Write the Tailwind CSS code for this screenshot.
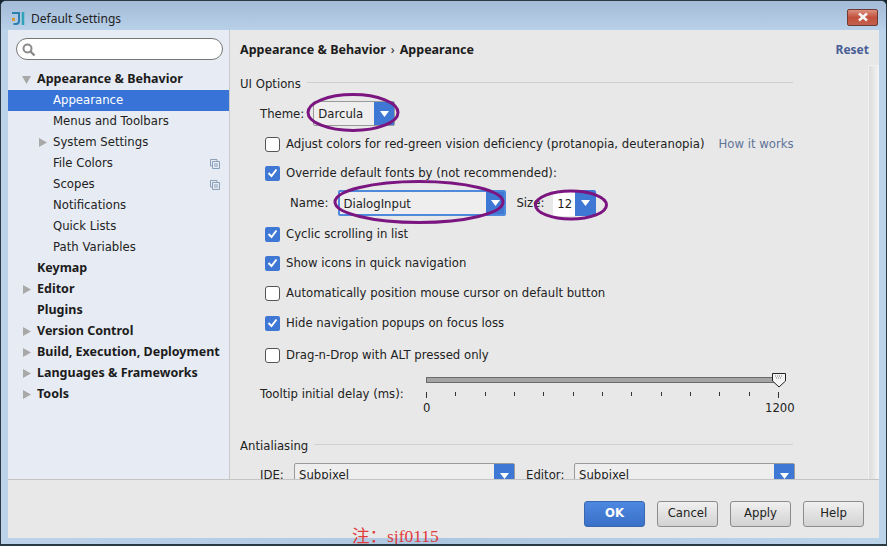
<!DOCTYPE html>
<html>
<head>
<meta charset="utf-8">
<script src="https://cdn.jsdelivr.net/npm/@tailwindcss/browser@4"></script>
</head>
<body class="w-[887px] h-[546px] overflow-hidden bg-[#15222c] font-['DejaVu_Sans',sans-serif] text-[11.7px] text-[#222]">
<div class="relative w-[887px] h-[546px] rounded-t-[6px] border border-[#2a3a44] border-b-[2px] bg-gradient-to-r from-[#bcd3ea] via-[#aec7e0] to-[#bcd4ea] flex flex-col overflow-hidden">
  <!-- title bar -->
  <div class="h-[29px] shrink-0 flex items-center pl-[10px] pr-[8px] pt-[6px] bg-gradient-to-b from-[#a3bbd6] to-[#b8d0e8]">
    <svg width="15" height="15" viewBox="0 0 15 15" class="shrink-0"><path d="M1 2H8V10Q8 13 5 13H2.500" fill="none" stroke="#2b7fb0" stroke-width="2"/><rect x="1" y="7" width="3" height="3" fill="#d6963a"/><path d="M12 1V14" stroke="#2fa3b8" stroke-width="2.500"/></svg>
    <span class="ml-[5px] font-['Noto_Sans',sans-serif] text-[12px] text-[#222]">Default Settings</span>
    <div class="ml-auto mt-[-3px] w-[31px] h-[17px] rounded-[2px] border border-[#6d3a34] bg-gradient-to-b from-[#dc8f7e] via-[#c2503c] to-[#c2604c] flex items-center justify-center">
      <svg width="12" height="10" viewBox="0 0 12 10"><path d="M2 1.500L10 8.500M10 1.500L2 8.500" stroke="#f4f4f4" stroke-width="2.600"/></svg>
    </div>
  </div>
  <!-- client -->
  <div class="mx-[7px] h-[508px] shrink-0 flex flex-col bg-[#e8e8e8]">
    <div class="h-[450px] flex shrink-0 overflow-hidden border-b border-[#c4c4c4]">
      <!-- sidebar -->
      <aside class="w-[222px] shrink-0 bg-[#e7ebf3] border-r border-[#c9c9c9] flex flex-col">
        <div class="ml-[8px] mr-[6px] mt-[8px] h-[22px] rounded-full border border-[#777] bg-white flex items-center pl-[4px] shrink-0">
          <svg width="15" height="15" viewBox="0 0 15 15"><circle cx="6.500" cy="6.500" r="4" fill="none" stroke="#8a8a8a" stroke-width="2"/><path d="M9.500 9.500L13.500 13.500" stroke="#8a8a8a" stroke-width="2.400"/></svg>
        </div>
        <ul class="mt-[9px] flex flex-col whitespace-nowrap">
          <li class="h-[21px] flex items-center font-bold font-['Noto_Sans',sans-serif] text-[12.5px] text-[#1c1c1c]"><svg width="9" height="8" viewBox="0 0 9 8" class="ml-[14px] mr-[6px]"><path d="M0 0H9L4.500 8Z" fill="#a8a8a8"/></svg>Appearance &amp; Behavior</li>
          <li class="h-[21px] flex items-center pl-[45px] bg-[#3874d8] text-white">Appearance</li>
          <li class="h-[21px] flex items-center pl-[45px]">Menus and Toolbars</li>
          <li class="h-[21px] flex items-center"><svg width="8" height="9" viewBox="0 0 8 9" class="ml-[31px] mr-[6px]"><path d="M0 0L8 4.500L0 9Z" fill="#a8a8a8"/></svg>System Settings</li>
          <li class="h-[21px] flex items-center pl-[45px]">File Colors<svg width="10" height="10" viewBox="0 0 10 10" class="ml-auto mr-[9px]"><path d="M.5.500H7V2M.5.500V7H2M2.500 2.500H9.500V9.500H2.500Z" fill="none" stroke="#8aa0b8"/><path d="M4 5H8M4 7H8" stroke="#8aa0b8"/></svg></li>
          <li class="h-[21px] flex items-center pl-[45px]">Scopes<svg width="10" height="10" viewBox="0 0 10 10" class="ml-auto mr-[9px]"><path d="M.5.500H7V2M.5.500V7H2M2.500 2.500H9.500V9.500H2.500Z" fill="none" stroke="#8aa0b8"/><path d="M4 5H8M4 7H8" stroke="#8aa0b8"/></svg></li>
          <li class="h-[21px] flex items-center pl-[45px]">Notifications</li>
          <li class="h-[21px] flex items-center pl-[45px]">Quick Lists</li>
          <li class="h-[21px] flex items-center pl-[45px]">Path Variables</li>
          <li class="h-[21px] flex items-center pl-[29px] font-bold font-['Noto_Sans',sans-serif] text-[12.5px] text-[#1c1c1c]">Keymap</li>
          <li class="h-[21px] flex items-center font-bold font-['Noto_Sans',sans-serif] text-[12.5px] text-[#1c1c1c]"><svg width="8" height="9" viewBox="0 0 8 9" class="ml-[15px] mr-[6px]"><path d="M0 0L8 4.500L0 9Z" fill="#a8a8a8"/></svg>Editor</li>
          <li class="h-[21px] flex items-center pl-[29px] font-bold font-['Noto_Sans',sans-serif] text-[12.5px] text-[#1c1c1c]">Plugins</li>
          <li class="h-[21px] flex items-center font-bold font-['Noto_Sans',sans-serif] text-[12.5px] text-[#1c1c1c]"><svg width="8" height="9" viewBox="0 0 8 9" class="ml-[15px] mr-[6px]"><path d="M0 0L8 4.500L0 9Z" fill="#a8a8a8"/></svg>Version Control</li>
          <li class="h-[21px] flex items-center font-bold font-['Noto_Sans',sans-serif] text-[12.5px] text-[#1c1c1c]"><svg width="8" height="9" viewBox="0 0 8 9" class="ml-[15px] mr-[6px]"><path d="M0 0L8 4.500L0 9Z" fill="#a8a8a8"/></svg>Build, Execution, Deployment</li>
          <li class="h-[21px] flex items-center font-bold font-['Noto_Sans',sans-serif] text-[12.5px] text-[#1c1c1c]"><svg width="8" height="9" viewBox="0 0 8 9" class="ml-[15px] mr-[6px]"><path d="M0 0L8 4.500L0 9Z" fill="#a8a8a8"/></svg>Languages &amp; Frameworks</li>
          <li class="h-[21px] flex items-center font-bold font-['Noto_Sans',sans-serif] text-[12.5px] text-[#1c1c1c]"><svg width="8" height="9" viewBox="0 0 8 9" class="ml-[15px] mr-[6px]"><path d="M0 0L8 4.500L0 9Z" fill="#a8a8a8"/></svg>Tools</li>
        </ul>
      </aside>
      <!-- main -->
      <main class="relative flex-1 flex flex-col min-w-0">
        <header class="h-[40px] shrink-0 flex items-center pl-[10px] pr-[10px] font-bold font-['Noto_Sans',sans-serif] text-[12.5px] text-[#1c1c1c]">
          <span>Appearance &amp; Behavior</span><span class="mx-[5px] font-normal">›</span><span>Appearance</span>
          <span class="ml-auto text-[12px] text-[#4a5f96]">Reset</span>
        </header>
        <div class="flex flex-1 min-h-0">
          <div class="w-[553px] ml-[10px] shrink-0 flex flex-col [&>*]:shrink-0 [&>div>span]:pt-[2px]">
            <div class="flex items-center h-[20px] mt-[4px]"><span>UI Options</span><i class="flex-1 ml-[6px] mt-[-4px] border-t border-[#cfcfcf]"></i></div>
            <div class="flex items-center h-[25px] mt-[7px] pl-[20px]">
              <span>Theme:</span>
              <div class="ml-[9px] w-[82px] h-[25px] flex rounded-[2px] border border-[#9a9a9a] bg-[#eeeeee]">
                <span class="flex-1 pl-[4px] leading-[24px]">Darcula</span>
                <span class="w-[20px] bg-[#3f78d4] flex items-center justify-center"><svg width="9" height="6" viewBox="0 0 9 6"><path d="M0 0H9L4.500 6Z" fill="#fff"/></svg></span>
              </div>
            </div>
            <div class="flex items-center h-[20px] mt-[8px] pl-[25px]">
              <i class="w-[15px] h-[15px] rounded-[3px] border border-[#555] bg-white shrink-0"></i>
              <span class="ml-[6px] whitespace-nowrap">Adjust colors for red-green vision deficiency (protanopia, deuteranopia)</span>
              <span class="ml-[14px] whitespace-nowrap text-[#5f7499]">How it works</span>
            </div>
            <div class="flex items-center h-[20px] mt-[9px] pl-[25px]">
              <i class="w-[15px] h-[15px] rounded-[2px] bg-[#3f78d4] shrink-0 flex items-center justify-center"><svg width="11" height="10" viewBox="0 0 11 10"><path d="M1.500 5L4.500 8L9.500 1.500" fill="none" stroke="#fff" stroke-width="2"/></svg></i>
              <span class="ml-[6px]">Override default fonts by (not recommended):</span>
            </div>
            <div class="flex items-center h-[26px] mt-[7px] pl-[50px]">
              <span>Name:</span>
              <div class="ml-[10px] w-[168px] h-[26px] flex rounded-[2px] border-[2px] border-[#4f89dc] bg-[#eeeeee]">
                <span class="flex-1 pl-[3px] leading-[24px]">DialogInput</span>
                <span class="w-[18px] bg-[#3f78d4] flex items-center justify-center"><svg width="9" height="6" viewBox="0 0 9 6"><path d="M0 0H9L4.500 6Z" fill="#fff"/></svg></span>
              </div>
              <span class="ml-[10px]">Size:</span>
              <div class="ml-[9px] w-[43px] h-[26px] flex rounded-[2px] bg-[#3f78d4]">
                <span class="w-[22px] bg-white pl-[4px] leading-[28px]">12</span>
                <span class="flex-1 flex items-center justify-center"><svg width="9" height="6" viewBox="0 0 9 6"><path d="M0 0H9L4.500 6Z" fill="#fff"/></svg></span>
              </div>
            </div>
            <div class="flex items-center h-[20px] mt-[8px] pl-[25px]">
              <i class="w-[15px] h-[15px] rounded-[2px] bg-[#3f78d4] shrink-0 flex items-center justify-center"><svg width="11" height="10" viewBox="0 0 11 10"><path d="M1.500 5L4.500 8L9.500 1.500" fill="none" stroke="#fff" stroke-width="2"/></svg></i>
              <span class="ml-[6px]">Cyclic scrolling in list</span>
            </div>
            <div class="flex items-center h-[20px] mt-[9px] pl-[25px]">
              <i class="w-[15px] h-[15px] rounded-[2px] bg-[#3f78d4] shrink-0 flex items-center justify-center"><svg width="11" height="10" viewBox="0 0 11 10"><path d="M1.500 5L4.500 8L9.500 1.500" fill="none" stroke="#fff" stroke-width="2"/></svg></i>
              <span class="ml-[6px]">Show icons in quick navigation</span>
            </div>
            <div class="flex items-center h-[20px] mt-[10px] pl-[25px]">
              <i class="w-[15px] h-[15px] rounded-[3px] border border-[#555] bg-white shrink-0"></i>
              <span class="ml-[6px]">Automatically position mouse cursor on default button</span>
            </div>
            <div class="flex items-center h-[20px] mt-[10px] pl-[25px]">
              <i class="w-[15px] h-[15px] rounded-[2px] bg-[#3f78d4] shrink-0 flex items-center justify-center"><svg width="11" height="10" viewBox="0 0 11 10"><path d="M1.500 5L4.500 8L9.500 1.500" fill="none" stroke="#fff" stroke-width="2"/></svg></i>
              <span class="ml-[6px]">Hide navigation popups on focus loss</span>
            </div>
            <div class="flex items-center h-[20px] mt-[12px] pl-[25px]">
              <i class="w-[15px] h-[15px] rounded-[3px] border border-[#555] bg-white shrink-0"></i>
              <span class="ml-[6px]">Drag-n-Drop with ALT pressed only</span>
            </div>
            <!-- slider -->
            <div class="flex mt-[7px] pl-[20px]">
              <span class="w-[166px] mt-[12px] shrink-0">Tooltip initial delay (ms):</span>
              <div class="relative w-[353px] h-[48px]">
                <div class="absolute left-0 right-0 top-[5px] h-[6px] border border-[#6a6a6a] border-r-0 bg-[#a4a4a4] rounded-l-[1px]"></div>
                <svg class="absolute left-[345px] top-0" width="16" height="16" viewBox="0 0 16 16"><path d="M1.500 1.500H14.500V9L8 15L1.500 9Z" fill="#f4f4f4" stroke="#222"/><path d="M4 4H12M5 6H11" stroke="#777" stroke-dasharray="1 1"/></svg>
                <div class="absolute left-0 right-0 top-[20px] h-[6px] flex justify-between">
                  <i class="w-[1px] h-[6px] bg-[#333]"></i><i class="w-[1px] h-[4px] bg-[#333]"></i><i class="w-[1px] h-[4px] bg-[#333]"></i><i class="w-[1px] h-[4px] bg-[#333]"></i><i class="w-[1px] h-[4px] bg-[#333]"></i><i class="w-[1px] h-[4px] bg-[#333]"></i><i class="w-[1px] h-[4px] bg-[#333]"></i><i class="w-[1px] h-[4px] bg-[#333]"></i><i class="w-[1px] h-[4px] bg-[#333]"></i><i class="w-[1px] h-[4px] bg-[#333]"></i><i class="w-[1px] h-[4px] bg-[#333]"></i><i class="w-[1px] h-[4px] bg-[#333]"></i><i class="w-[1px] h-[6px] bg-[#333]"></i>
                </div>
                <span class="absolute left-[-3px] top-[28px]">0</span>
                <span class="absolute left-[339px] top-[28px]">1200</span>
              </div>
            </div>
            <div class="flex items-center h-[20px] mt-[16px]"><span>Antialiasing</span><i class="flex-1 ml-[6px] mt-[-4px] border-t border-[#cfcfcf]"></i></div>
            <div class="flex items-center mt-[7px] pl-[20px] h-[26px] w-[570px]">
              <span class="w-[34px] mt-[-2px]">IDE:</span>
              <div class="w-[221px] h-[26px] flex rounded-[2px] border border-[#9a9a9a] bg-[#eeeeee] shrink-0">
                <span class="flex-1 pl-[4px] leading-[23px]">Subpixel</span>
                <span class="w-[20px] bg-[#3f78d4] flex items-center justify-center"><svg width="9" height="6" viewBox="0 0 9 6"><path d="M0 0H9L4.500 6Z" fill="#fff"/></svg></span>
              </div>
              <span class="ml-[11px] w-[48px] mt-[-2px]">Editor:</span>
              <div class="w-[221px] h-[26px] flex rounded-[2px] border border-[#9a9a9a] bg-[#eeeeee] shrink-0">
                <span class="flex-1 pl-[4px] leading-[23px]">Subpixel</span>
                <span class="w-[20px] bg-[#3f78d4] flex items-center justify-center"><svg width="9" height="6" viewBox="0 0 9 6"><path d="M0 0H9L4.500 6Z" fill="#fff"/></svg></span>
              </div>
            </div>
          </div>
          <div class="ml-auto mt-[-5px] w-[11px] shrink-0 rounded-t-[2px] border border-b-0 border-[#f2f2f2] bg-gradient-to-r from-[#dcdcdc] to-[#f2f2f2]"></div>
        </div>
      </main>
    </div>
    <!-- footer -->
    <footer class="flex-1 flex items-start justify-end gap-[12px] pt-[21px] pr-[15px]">
      <button class="w-[61px] h-[26px] rounded-[3px] border border-[#3a68b0] bg-gradient-to-b from-[#4d88e0] to-[#3a70c8] text-white font-bold">OK</button>
      <button class="w-[61px] h-[26px] rounded-[3px] border border-[#8c8c8c] bg-gradient-to-b from-[#f0f0f0] to-[#d2d2d2]">Cancel</button>
      <button class="w-[61px] h-[26px] rounded-[3px] border border-[#8c8c8c] bg-gradient-to-b from-[#f0f0f0] to-[#d2d2d2]">Apply</button>
      <button class="w-[61px] h-[26px] rounded-[3px] border border-[#8c8c8c] bg-gradient-to-b from-[#f0f0f0] to-[#d2d2d2]">Help</button>
    </footer>
  </div>
  <!-- annotations -->
  <svg class="absolute left-[-1px] top-[-1px] pointer-events-none" width="887" height="546" viewBox="0 0 887 546" fill="none" stroke="#7b1580" stroke-width="3">
    <ellipse cx="353" cy="112.500" rx="45" ry="18"/>
    <ellipse cx="419" cy="202" rx="84" ry="20.500"/>
    <ellipse cx="571" cy="205" rx="35.500" ry="14"/>
  </svg>
  <span class="absolute left-[351px] top-[526px] font-['Liberation_Serif','Noto_Sans_CJK_SC',serif] text-[17.5px] leading-[18px] text-[#e03c3c] whitespace-nowrap">注：sjf0115</span>
</div>
</body>
</html>
